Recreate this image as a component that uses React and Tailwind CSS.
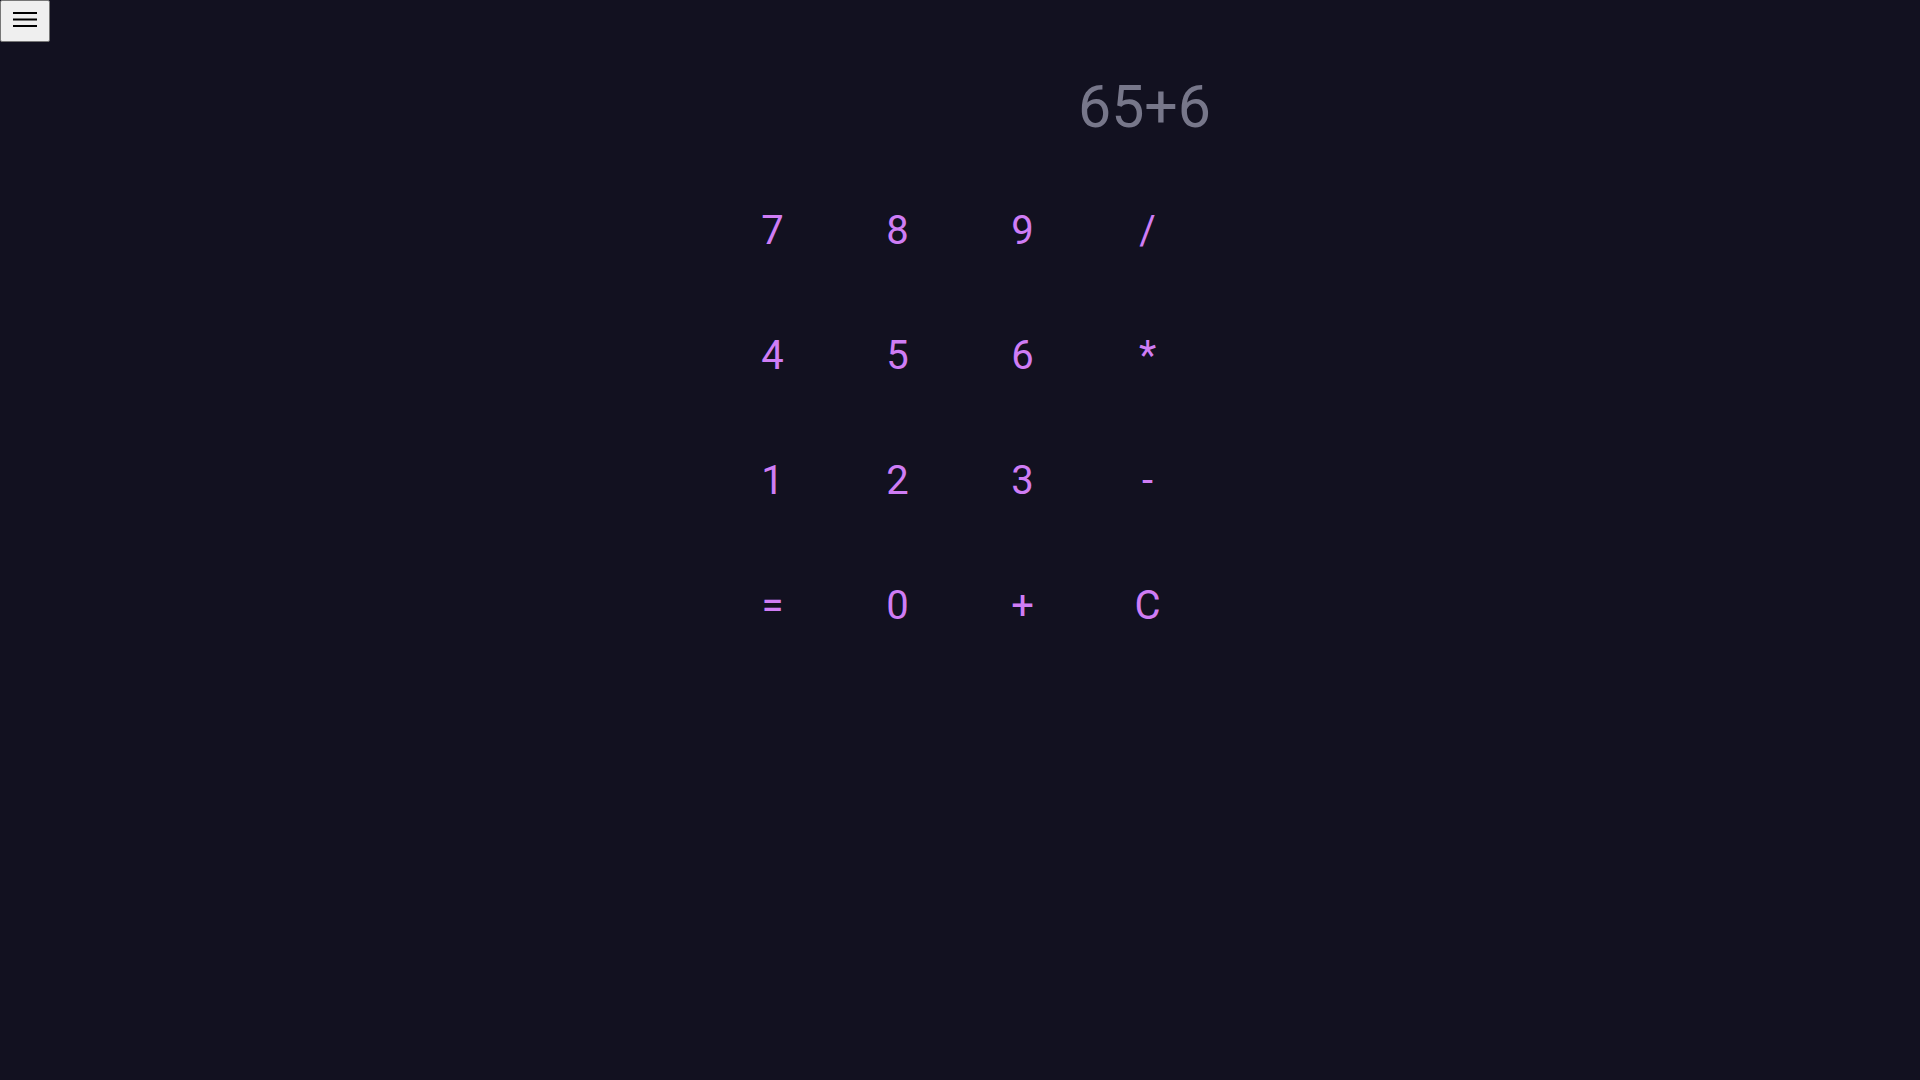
const keys = ['7', '8', '9', '/', '4', '5', '6', '*', '1', '2', '3', '-', '=', '0', '+', 'C']

export default function App() {
  return (
    <div className="relative min-h-screen w-full bg-[#121120] font-['Roboto','Liberation_Sans',sans-serif]">
      {/* Menu toggle */}
      <button className="absolute left-0 top-0 flex h-[42px] w-[50px] items-center justify-center rounded-[2px] border border-[#767676] bg-[#efefef]">
        <svg className="-mt-[3px]" width="24" height="16" viewBox="0 0 24 16" fill="#000">
          <rect x="0" y="0" width="24" height="2" />
          <rect x="0" y="6.5" width="24" height="2" />
          <rect x="0" y="13" width="24" height="2" />
        </svg>
      </button>

      <div className="mx-auto w-[500px] pt-[77px]">
        {/* Display */}
        <div className="-mr-[1px] h-[59px] text-right text-[59px] leading-none text-[#77778a]">65+6</div>

        {/* Keypad */}
        <div className="mt-[32px] grid grid-cols-4">
          {keys.map((k) => (
            <button
              key={k}
              className="flex h-[125px] items-center justify-center text-[40px] leading-none text-[#cf7df5]"
            >
              {k}
            </button>
          ))}
        </div>
      </div>
    </div>
  )
}
